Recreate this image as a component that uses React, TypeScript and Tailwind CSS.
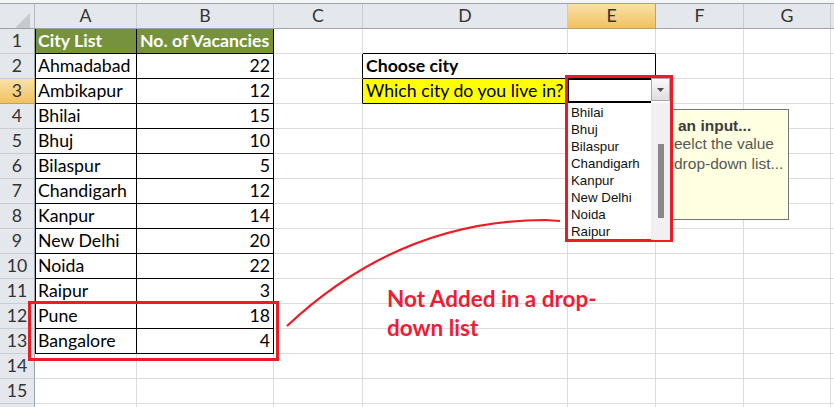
import React from 'react';

type Col = { k: string; w: string };
const COLS: Col[] = [
  { k: 'A', w: 'w-[102px]' },
  { k: 'B', w: 'w-[137px]' },
  { k: 'C', w: 'w-[89px]' },
  { k: 'D', w: 'w-[205px]' },
  { k: 'E', w: 'w-[88px]' },
  { k: 'F', w: 'w-[88px]' },
  { k: 'G', w: 'w-[87px]' },
  { k: 'H', w: 'w-[100px]' },
];

const DATA: [string, string][] = [
  ['City List', 'No. of Vacancies'],
  ['Ahmadabad', '22'],
  ['Ambikapur', '12'],
  ['Bhilai', '15'],
  ['Bhuj', '10'],
  ['Bilaspur', '5'],
  ['Chandigarh', '12'],
  ['Kanpur', '14'],
  ['New Delhi', '20'],
  ['Noida', '22'],
  ['Raipur', '3'],
  ['Pune', '18'],
  ['Bangalore', '4'],
];

const LIST = ['Bhilai', 'Bhuj', 'Bilaspur', 'Chandigarh', 'Kanpur', 'New Delhi', 'Noida', 'Raipur'];

function cellInfo(r: number, c: string) {
  let bg = 'bg-white';
  let br = 'border-r-[#dadcdd]';
  let bb = 'border-b-[#dadcdd]';
  let extra = '';
  let text = '';
  let align = 'justify-start';
  let weight = 'font-normal';
  let color = 'text-black';
  if (r >= 1 && r <= 13 && (c === 'A' || c === 'B')) {
    br = 'border-r-black';
    bb = 'border-b-black';
    text = c === 'A' ? DATA[r - 1][0] : DATA[r - 1][1];
    if (c === 'A') extra = 'shadow-[inset_1px_0_0_#000]';
    if (c === 'B' && r > 1) align = 'justify-end';
    if (r === 1) {
      bg = 'bg-[#76923c]';
      weight = 'font-bold';
      color = 'text-white';
    }
  }
  if (r === 1 && (c === 'D' || c === 'E')) bb = 'border-b-black';
  if ((r === 2 || r === 3) && c === 'C') br = 'border-r-black';
  if (r === 2 && c === 'D') {
    br = 'border-r-white';
    bb = 'border-b-black';
    text = 'Choose city';
    weight = 'font-bold';
  }
  if (r === 2 && c === 'E') {
    br = 'border-r-black';
    bb = 'border-b-black';
  }
  if (r === 3 && c === 'D') {
    bg = 'bg-[#ffff00]';
    br = 'border-r-black';
    bb = 'border-b-black';
    text = 'Which city do you live in?';
  }
  return { bg, br, bb, extra, text, align, weight, color };
}

function Cell({ r, col }: { r: number; col: Col }) {
  const i = cellInfo(r, col.k);
  return (
    <div
      className={`${col.w} ${i.bg} ${i.br} ${i.bb} ${i.extra} ${i.align} ${i.weight} ${i.color} shrink-0 h-full border-r border-b flex items-end px-[3px] pb-[1px] whitespace-nowrap leading-[22px]`}
    >
      {i.text}
    </div>
  );
}

function HeaderRow() {
  return (
    <div className="flex h-[26px] border-t border-t-[#9da3aa]">
      <div className="w-[35px] shrink-0 h-full bg-[#e4e7eb] border-r border-b border-r-[#b6bcc4] border-b-[#9da3aa] relative">
        <svg className="absolute left-[15px] top-[9px]" width="16" height="16" viewBox="0 0 16 16">
          <polygon points="15,0 15,15 0,15" fill="#c6c9cd" />
        </svg>
      </div>
      {COLS.map((c) => (
        <div
          key={c.k}
          className={`${c.w} shrink-0 h-full border-r border-b flex items-center justify-center text-[#333] ${
            c.k === 'E'
              ? 'bg-gradient-to-b from-[#f9e1a8] to-[#f1c15f] border-r-[#c2a15c] border-b-[#c2a15c]'
              : 'bg-[#e4e7eb] border-r-[#c8cdd3] border-b-[#9da3aa]'
          }`}
        >
          {c.k === 'H' ? '' : c.k}
        </div>
      ))}
    </div>
  );
}

function Row({ r }: { r: number }) {
  return (
    <div className="flex h-[25px]">
      <div
        className={`w-[35px] shrink-0 h-full border-r border-b flex items-center justify-center text-[#333] ${
          r === 3
            ? 'bg-gradient-to-b from-[#f9e1a8] to-[#f1c15f] border-r-[#c2a15c] border-b-[#c2a15c]'
            : 'bg-[#e4e7eb] border-r-[#9da3aa] border-b-[#c8cdd3]'
        }`}
      >
        {r <= 15 ? r : ''}
      </div>
      {COLS.map((c) => (
        <Cell key={c.k} r={r} col={c} />
      ))}
    </div>
  );
}

export default function App() {
  const rows = Array.from({ length: 16 }, (_, i) => i + 1);
  return (
    <div className="w-[834px] h-[407px] overflow-hidden relative bg-white [font-family:Lato,'Liberation_Sans',sans-serif] text-[17.7px]">
      <div className="h-[3px] bg-[#f4f5f7]" />
      <HeaderRow />
      {rows.map((r) => (
        <Row key={r} r={r} />
      ))}

      {/* red box around Pune / Bangalore */}
      <div className="absolute left-[28px] top-[301px] w-[251px] h-[60px] border-[3px] border-[#ed1c24]" />

      {/* input message tooltip */}
      <div className="absolute left-[640px] top-[109px] w-[149px] h-[111px] bg-[#ffffe1] border border-[#767676] z-10 [font-family:'Liberation_Sans',Arial,sans-serif] text-[15.5px] leading-[18px] text-[#575757] pl-[35px] pt-[7px] whitespace-nowrap overflow-hidden">
        <div className="font-bold text-[#3c3c3c] pl-[2px]">an input...</div>
        <div className="-ml-[2px]">eelct the value</div>
        <div className="-ml-[2px] mt-[2px]">drop-down list...</div>
      </div>

      {/* dropdown */}
      <div className="absolute left-[565px] top-[75px] w-[108px] h-[167px] border-[3px] border-[#ed1c24] z-20 flex flex-col bg-white">
        <div className="h-[25px] flex shrink-0">
          <div className="flex-1 border-y-2 border-l border-black" />
          <div className="w-[19px] h-[23px] border border-[#a9a9a9] bg-gradient-to-b from-[#fafafa] to-[#dedede] flex items-center justify-center">
            <svg width="7" height="4" viewBox="0 0 7 4">
              <polygon points="0,0 7,0 3.5,4" fill="#4d4d4d" />
            </svg>
          </div>
        </div>
        <div className="flex-1 flex">
          <div className="flex-1 pl-[3px] pt-[1px] [font-family:'Liberation_Sans',Arial,sans-serif] text-[13.3px] leading-[17px] text-[#111]">
            {LIST.map((x) => (
              <div key={x} className="h-[17px] whitespace-nowrap">
                {x}
              </div>
            ))}
          </div>
          <div className="w-[19px] bg-[#f0f0f0] flex justify-center pt-[41px]">
            <div className="w-[6px] h-[74px] bg-[#888888]" />
          </div>
        </div>
      </div>

      {/* curve */}
      <svg className="absolute left-0 top-0 pointer-events-none z-30" width="834" height="407">
        <path d="M287,326 Q400,220 545,220 L560,221" fill="none" stroke="#ed1c24" strokeWidth="2.2" />
      </svg>

      {/* annotation */}
      <div className="absolute left-[387px] top-[284px] z-30 text-[#ee1c34] font-bold text-[22.5px] leading-[29px] whitespace-nowrap [font-family:Lato,'Liberation_Sans',sans-serif]">
        <div>Not Added in a drop-</div>
        <div>down list</div>
      </div>
    </div>
  );
}
